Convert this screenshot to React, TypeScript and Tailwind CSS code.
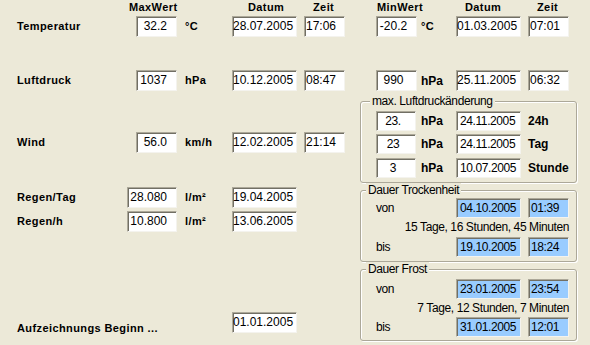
import React from "react";

const boxBase =
  "shrink-0 border border-t-[#aca899] border-l-[#aca899] border-b-[#f4f3ee] border-r-[#f4f3ee] shadow-[inset_1px_1px_0_#716f64] text-black whitespace-nowrap overflow-hidden";

function Box({ cls, v }: { cls: string; v: string }) {
  return <div className={`${boxBase} ${cls}`}>{v}</div>;
}

const lbl = "text-[11px] font-bold tracking-[0.4px] leading-[13px] whitespace-nowrap";
const topVal = "h-[21px] bg-white text-[12px] leading-[19px]";
const grpVal = "h-[20px] text-[12px] tracking-[-0.4px] leading-[18px]";

function TopRow({
  label,
  maxCls,
  max,
  unit,
  date,
  time,
  extra,
  cls,
}: {
  label: string;
  maxCls: string;
  max: string;
  unit: string;
  date: string;
  time?: string;
  extra?: React.ReactNode;
  cls: string;
}) {
  return (
    <div className={`flex h-[21px] items-center ${cls}`}>
      <div className={`w-[127px] pl-[17px] ${lbl}`}>{label}</div>
      <div className="w-[50px] flex justify-end">
        <Box cls={`${topVal} ${maxCls}`} v={max} />
      </div>
      <div className={`w-[55px] pl-[8px] ${lbl}`}>{unit}</div>
      <Box cls={`${topVal} w-[65px] pl-0`} v={date} />
      {time !== undefined && (
        <>
          <div className="w-[7px] shrink-0" />
          <Box cls={`${topVal} w-[41px] pl-[1px]`} v={time} />
        </>
      )}
      {extra}
    </div>
  );
}

function MinPart({ min, unit, unitCls, date, time }: { min: string; unit: string; unitCls: string; date: string; time: string }) {
  return (
    <>
      <div className="w-[31px] shrink-0" />
      <Box cls={`${topVal} w-[41px] text-center pr-[6px]`} v={min} />
      <div className={`w-[39px] shrink-0 pl-[4px] ${unitCls}`}>{unit}</div>
      <Box cls={`${topVal} w-[65px] pl-0`} v={date} />
      <div className="w-[7px] shrink-0" />
      <Box cls={`${topVal} w-[41px] pl-[1px]`} v={time} />
    </>
  );
}

const bold12 = "text-[12px] font-bold leading-[14px] whitespace-nowrap";
const reg12 = "text-[12px] tracking-[-0.4px] leading-[14px] whitespace-nowrap";

function ChangeRow({ v, date, label, cls }: { v: string; date: string; label: string; cls: string }) {
  return (
    <div className={`flex h-[20px] items-center ${cls}`}>
      <Box cls={`${grpVal} bg-white w-[40px] text-center pr-[6px]`} v={v} />
      <div className={`w-[40px] shrink-0 pl-[5px] ${bold12}`}>hPa</div>
      <Box cls={`${grpVal} bg-white w-[65px] pl-[3px]`} v={date} />
      <div className="w-[7px] shrink-0" />
      <div className={bold12}>{label}</div>
    </div>
  );
}

function SpanRow({ label, date, time, cls }: { label: string; date: string; time: string; cls: string }) {
  return (
    <div className={`flex h-[20px] items-center ${cls}`}>
      <div className={`w-[80px] shrink-0 ${reg12}`}>{label}</div>
      <Box cls={`${grpVal} bg-[#99ccff] w-[65px] pl-[3px]`} v={date} />
      <div className="w-[7px] shrink-0" />
      <Box cls={`${grpVal} bg-[#99ccff] w-[41px] pl-[2px]`} v={time} />
    </div>
  );
}

const fs =
  "block w-[217px] m-0 p-0 border border-[#aca899] rounded-[3px] shadow-[inset_1px_1px_0_#ffffff,1px_1px_0_#ffffff]";

export default function App() {
  return (
    <div className="w-[590px] h-[345px] bg-[#ece9d8] overflow-hidden text-black font-['Liberation_Sans',Arial,sans-serif]">
      {/* header */}
      <div className={`flex h-[16px] pt-[1px] ${lbl}`}>
        <div className="w-[129px] shrink-0" />
        <div className="w-[119px] shrink-0">MaxWert</div>
        <div className="w-[65px] shrink-0">Datum</div>
        <div className="w-[64px] shrink-0">Zeit</div>
        <div className="w-[88px] shrink-0">MinWert</div>
        <div className="w-[72px] shrink-0">Datum</div>
        <div className="shrink-0">Zeit</div>
      </div>

      <TopRow
        cls=""
        label="Temperatur"
        maxCls="w-[41px] text-right pr-[9px]"
        max="32.2"
        unit="°C"
        date="28.07.2005"
        time="17:06"
        extra={<MinPart min="-20.2" unit="°C" unitCls={lbl} date="01.03.2005" time="07:01" />}
      />
      <TopRow
        cls="mt-[33px]"
        label="Luftdruck"
        maxCls="w-[41px] text-right pr-[9px]"
        max="1037"
        unit="hPa"
        date="10.12.2005"
        time="08:47"
        extra={<MinPart min="990" unit="hPa" unitCls={bold12} date="25.11.2005" time="06:32" />}
      />

      <div className="flex">
        {/* left column */}
        <div className="w-[360px] shrink-0">
          <TopRow
            cls="mt-[41px]"
            label="Wind"
            maxCls="w-[41px] text-right pr-[9px]"
            max="56.0"
            unit="km/h"
            date="12.02.2005"
            time="21:14"
          />
          <TopRow
            cls="mt-[34px]"
            label="Regen/Tag"
            maxCls="w-[50px] text-right pr-[9px]"
            max="28.080"
            unit="l/m²"
            date="19.04.2005"
          />
          <TopRow
            cls="mt-[3px]"
            label="Regen/h"
            maxCls="w-[50px] text-right pr-[9px]"
            max="10.800"
            unit="l/m²"
            date="13.06.2005"
          />
          <div className="flex h-[21px] items-end mt-[80px]">
            <div className={`w-[232px] shrink-0 pl-[17px] mb-[-2px] ${lbl}`}>Aufzeichnungs Beginn ...</div>
            <Box cls={`${topVal} w-[65px] pl-0`} v="01.01.2005" />
          </div>
        </div>

        {/* right column */}
        <div className="w-[217px] shrink-0 pt-[3px]">
          <fieldset className={fs}>
            <legend className={`ml-[9px] px-[2px] bg-[#ece9d8] ${reg12}`}>max. Luftdruckänderung</legend>
            <div className="pl-[15px] pr-[7px] pb-[4px]">
              <ChangeRow cls="mt-[3px]" v="23." date="24.11.2005" label="24h" />
              <ChangeRow cls="mt-[3px]" v="23" date="24.11.2005" label="Tag" />
              <ChangeRow cls="mt-[4px]" v="3" date="10.07.2005" label="Stunde" />
            </div>
          </fieldset>

          <fieldset className={fs}>
            <legend className={`ml-[5px] px-[2px] bg-[#ece9d8] ${reg12}`}>Dauer Trockenheit</legend>
            <div className="pl-[15px] pr-[7px] pb-[4px]">
              <SpanRow cls="mt-[1px]" label="von" date="04.10.2005" time="01:39" />
              <div className={`mt-[2px] h-[14px] text-right ${reg12}`}>15 Tage, 16 Stunden, 45 Minuten</div>
              <SpanRow cls="mt-[3px]" label="bis" date="19.10.2005" time="18:24" />
            </div>
          </fieldset>

          <fieldset className={fs}>
            <legend className={`ml-[5px] px-[2px] bg-[#ece9d8] ${reg12}`}>Dauer Frost</legend>
            <div className="pl-[15px] pr-[7px] pb-[3px]">
              <SpanRow cls="mt-[3px]" label="von" date="23.01.2005" time="23:54" />
              <div className={`mt-[2px] h-[14px] text-right ${reg12}`}>7 Tage, 12 Stunden, 7 Minuten</div>
              <SpanRow cls="mt-[2px]" label="bis" date="31.01.2005" time="12:01" />
            </div>
          </fieldset>
        </div>
      </div>
    </div>
  );
}
